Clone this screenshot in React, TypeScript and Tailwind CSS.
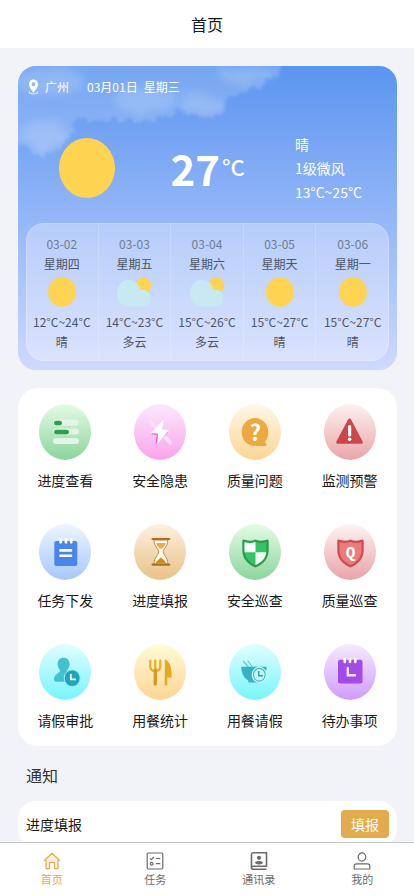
import { ReactNode } from "react";

type Forecast = {
  date: string;
  week: string;
  range: string;
  text: string;
};

type Service = {
  name: string;
  id: string;
  from: string;
  to: string;
  icon: ReactNode;
};

const forecasts: Forecast[] = [
  { date: "03-02", week: "星期四", range: "12°C~24°C", text: "晴" },
  { date: "03-03", week: "星期五", range: "14°C~23°C", text: "多云" },
  { date: "03-04", week: "星期六", range: "15°C~26°C", text: "多云" },
  { date: "03-05", week: "星期天", range: "15°C~27°C", text: "晴" },
  { date: "03-06", week: "星期一", range: "15°C~27°C", text: "晴" },
];

const shield =
  "M26.5 15.5 C22.5 17.4 18.5 17 14.6 15.6 Q13.3 15.6 13.3 17 V26 C13.3 35 19 40.5 26.5 43.5 C34 40.5 39.7 35 39.7 26 V17 Q39.7 15.6 38.4 15.6 C34.5 17 30.5 17.4 26.5 15.5Z";
const innerShield =
  "M26.5 18 C22.5 19.5 19 19.3 15.5 18.3 V26 C15.5 33.5 20 38.3 26.5 41 C33 38.3 37.5 33.5 37.5 26 V18.3 C34 19.3 30.5 19.5 26.5 18Z";

const services: Service[] = [
  {
    name: "进度查看",
    id: "progress",
    from: "#e4fbe4",
    to: "#8bd49c",
    icon: (
      <>
        <g fill="#e3f5e6">
          <rect x="14" y="15.5" width="26" height="6" rx="3" />
          <rect x="14" y="24.5" width="26" height="6" rx="3" />
          <rect x="14" y="34" width="26" height="6" rx="3" />
        </g>
        <rect x="15" y="16.8" width="8" height="4.4" rx="2.2" fill="#2f9f4d" />
        <rect x="15" y="25.8" width="15" height="4.4" rx="2.2" fill="#2f9f4d" />
      </>
    ),
  },
  {
    name: "安全隐患",
    id: "danger",
    from: "#fde9fd",
    to: "#f9a3ea",
    icon: (
      <>
        <path
          d="M16 17.5 L21 22.5 M31.5 33.5 L36 38.5"
          stroke="#fbe0f8"
          strokeWidth="3.6"
          strokeLinecap="round"
        />
        <path d="M29 19 L17.3 30.3 L22.5 31 L21.5 40.8 L34 28 L29 27Z" fill="#e763d2" />
        <path d="M29.5 15.5 L17 29 L24 29.8 L23.2 40 L35 26 L28.6 25.5Z" fill="#fff" />
      </>
    ),
  },
  {
    name: "质量问题",
    id: "question",
    from: "#fff7e9",
    to: "#fdd592",
    icon: (
      <>
        <path
          d="M26 14 C33.5 14 39.3 20.5 39.3 28 C39.3 32 38 35 36 38 L37.8 40.5 Q38 42 36.5 42 H26 C18.5 42 12.7 36 12.7 28 C12.7 20.5 18.5 14 26 14Z"
          fill="#eba93f"
        />
        <text
          x="26.3"
          y="36.5"
          textAnchor="middle"
          fontSize="22"
          fontWeight="700"
          fontFamily="'Noto Sans CJK SC', sans-serif"
          fill="#fff"
        >
          ?
        </text>
      </>
    ),
  },
  {
    name: "监测预警",
    id: "alert",
    from: "#fdf1f1",
    to: "#e9a5a8",
    icon: (
      <>
        <path
          d="M25.6 16 L37.3 38.3 H13.7Z"
          fill="#cc4549"
          stroke="#cc4549"
          strokeWidth="3"
          strokeLinejoin="round"
        />
        <path d="M25.6 22.5 V31" stroke="#fff" strokeWidth="3.2" strokeLinecap="round" />
        <circle cx="25.6" cy="35.3" r="1.8" fill="#fff" />
      </>
    ),
  },
  {
    name: "任务下发",
    id: "task",
    from: "#eef5ff",
    to: "#a6c8fc",
    icon: (
      <>
        <rect x="15.3" y="17" width="23" height="25" rx="2" fill="#4a86ea" />
        <path
          d="M21.7 15.5 V18.3 M27 15.5 V18.3 M32.2 15.5 V18.3"
          stroke="#fff"
          strokeWidth="2.8"
          strokeLinecap="round"
        />
        <path
          d="M21.4 26.4 H32 M21.4 31.8 H32"
          stroke="#fff"
          strokeWidth="2.6"
          strokeLinecap="round"
        />
      </>
    ),
  },
  {
    name: "进度填报",
    id: "hourglass",
    from: "#fcf1e0",
    to: "#e9c287",
    icon: (
      <>
        <path
          d="M20 16 H33.8 C33.8 23 29.3 24 29.3 27.8 C29.3 31.5 33.8 33 33.8 40 H20 C20 33 24.6 31.5 24.6 27.8 C24.6 24 20 23 20 16Z"
          fill="#fffaf0"
          stroke="#b98c4a"
          strokeWidth="1"
        />
        <path d="M22.3 19 H31.6 Q31 23 27 25 Q23 23 22.3 19Z" fill="#f0ac4a" />
        <path d="M21.8 39 C23 36 25 35.5 27 33.5 C29 35.5 31 36 32 39Z" fill="#d18b1d" />
        <path
          d="M18.5 15 H35.3 M18.5 40.6 H35.3"
          stroke="#a87125"
          strokeWidth="2.2"
          strokeLinecap="round"
        />
      </>
    ),
  },
  {
    name: "安全巡查",
    id: "safe",
    from: "#e4fce6",
    to: "#8dd49c",
    icon: (
      <>
        <path d={shield} fill="#2d9a4d" />
        <path d={innerShield} fill="#35c463" />
        <path d="M26.5 18 C22.5 19.5 19 19.3 15.5 18.3 V26 L15.8 28.3 H26.5Z" fill="#fff" />
        <path d="M26.5 28.3 H37.3 C36.6 34.5 32.5 38.5 26.5 41Z" fill="#f1fcf3" />
      </>
    ),
  },
  {
    name: "质量巡查",
    id: "quality",
    from: "#fdf3f3",
    to: "#e8a4a7",
    icon: (
      <>
        <path d={shield} fill="#cc4c50" />
        <path d={innerShield} fill="#ea7b7e" />
        <text
          x="26.5"
          y="33.5"
          textAnchor="middle"
          fontSize="16"
          fontWeight="700"
          fontFamily="'Liberation Mono', monospace"
          fill="#fff"
        >
          Q
        </text>
      </>
    ),
  },
  {
    name: "请假审批",
    id: "leave",
    from: "#e2fdff",
    to: "#76f5fb",
    icon: (
      <>
        <path
          d="M24.5 13.8 C28.3 13.8 30.6 16.4 30.6 20 C30.6 23 29.2 24.5 28.3 26.2 C28 28.5 34 28.5 34.5 33 V37.8 H17 Q15 37.8 15 35.5 C15 29.5 21.2 29.5 21 26.2 C20 24.5 18.6 23 18.6 20 C18.6 16.4 20.8 13.8 24.5 13.8Z"
          fill="#43c1cf"
        />
        <ellipse cx="33.2" cy="34.2" rx="8" ry="8.4" fill="#1fa6bd" stroke="#9cecf3" strokeWidth="1" />
        <path d="M31.8 30 V35.3 H36.8" fill="none" stroke="#fff" strokeWidth="1.7" />
      </>
    ),
  },
  {
    name: "用餐统计",
    id: "meal",
    from: "#fffbd9",
    to: "#fdd592",
    icon: (
      <>
        <path
          d="M16.3 16.7 V22 Q16.3 27 21.3 27 Q26.3 27 26.3 22 V16.7 M21.3 16.7 V25"
          fill="none"
          stroke="#e6b02c"
          strokeWidth="2.3"
          strokeLinecap="round"
        />
        <path d="M21.3 26 V40" stroke="#d59a25" strokeWidth="3.4" strokeLinecap="round" />
        <path
          d="M30.8 16.3 Q30.8 15 32 15.7 C36.2 18.5 38 25 37.6 33.5 H33.3 V41 Q32 42.4 30.8 41Z"
          fill="#e6a81f"
        />
      </>
    ),
  },
  {
    name: "用餐请假",
    id: "bowl",
    from: "#e2fdff",
    to: "#76f5fb",
    icon: (
      <>
        <path
          d="M14.5 17.5 L19 22.5 M19 17 L23 22.5"
          stroke="#62cbd5"
          strokeWidth="1.2"
          strokeLinecap="round"
        />
        <path
          d="M12.3 22.8 H37.5 C37.5 29.5 34.5 34.5 31 36.5 V38.5 H19.3 V36.5 C15 34 12.3 29.5 12.3 22.8Z"
          fill="#35b3c2"
        />
        <ellipse cx="30.3" cy="30.8" rx="7.6" ry="8" fill="#d8fbfd" />
        <ellipse cx="30.3" cy="30.8" rx="5.9" ry="6.4" fill="#c7f4f8" stroke="#45bcca" strokeWidth="1.2" />
        <path d="M29.8 27 V31.8 H34" fill="none" stroke="#2aa5b6" strokeWidth="1.5" />
      </>
    ),
  },
  {
    name: "待办事项",
    id: "todo",
    from: "#f6eafe",
    to: "#d09bfb",
    icon: (
      <>
        <rect x="14" y="15.8" width="24.5" height="23.6" rx="2" fill="#a24be6" />
        <path
          d="M20.8 15 V18 M26 15 V18 M31.3 15 V18"
          stroke="#fff"
          strokeWidth="2.6"
          strokeLinecap="round"
        />
        <path
          d="M23.8 24 V31.2 H31"
          fill="none"
          stroke="#f3e3fd"
          strokeWidth="2.4"
          strokeLinecap="round"
        />
      </>
    ),
  },
];

const tabs = [
  {
    name: "首页",
    icon: (
      <>
        <path d="M1.5 8.5 L9 1.5 L16.5 8.5 H14.8 V16.5 H11.5 V10.5 H6.5 V16.5 H3.2 V8.5Z" fill="#fbeeda" stroke="none" />
        <path d="M1 8.7 L9 1.3 L17 8.7 M3 8 V16.6 H6.5 V10.4 H11.5 V16.6 H15 V8" />
      </>
    ),
  },
  {
    name: "任务",
    icon: (
      <>
        <rect x="1.2" y="1" width="15.6" height="16" rx="1.2" />
        <path d="M4 6.3 L5.4 7.7 L7.8 5 M9.8 6.5 H14.3 M9.8 11.7 H14.3" />
        <circle cx="5.7" cy="11.8" r="1.4" />
      </>
    ),
  },
  {
    name: "通讯录",
    icon: (
      <>
        <path d="M1.5 17 V2.5 Q1.5 0.8 3 0.8 H16.5 V14.3 H3 Q1.5 14.3 1.5 15.8 Q1.5 17.3 3 17.3 H16.5" strokeWidth="1.6" />
        <circle cx="9" cy="5.8" r="2.1" fill="currentColor" stroke="none" />
        <path d="M5 10 Q9 7.8 13 10 Q13 12.4 9 12.4 Q5 12.4 5 10Z" fill="currentColor" stroke="none" />
      </>
    ),
  },
  {
    name: "我的",
    icon: (
      <>
        <ellipse cx="9" cy="5" rx="3.8" ry="4.2" />
        <path d="M1.2 17 V14 Q1.2 11.8 3.4 11.8 H14.6 Q16.8 11.8 16.8 14 V17Z" />
      </>
    ),
  },
];

const Clouds = () => (
  <svg
    className="absolute left-0 top-0"
    width="290"
    height="110"
    viewBox="0 0 290 110"
    fill="#fff"
    aria-hidden="true"
  >
    <filter id="cloud" x="-10%" y="-10%" width="120%" height="120%">
      <feTurbulence type="fractalNoise" baseFrequency="0.13" numOctaves="3" seed="4" result="n" />
      <feDisplacementMap in="SourceGraphic" in2="n" scale="14" xChannelSelector="R" yChannelSelector="G" />
      <feGaussianBlur stdDeviation="1.6" />
    </filter>
    <filter id="puff" x="-30%" y="-30%" width="160%" height="160%">
      <feTurbulence type="fractalNoise" baseFrequency="0.06" numOctaves="3" seed="9" result="n" />
      <feDisplacementMap in="SourceGraphic" in2="n" scale="18" xChannelSelector="R" yChannelSelector="G" />
      <feGaussianBlur stdDeviation="4" />
    </filter>
    <path
      filter="url(#cloud)"
      opacity="0.17"
      d="M-12 -12 H270 L261 8 L241 21 L221 26 L207 33 L207 44 L194 51 L171 49 L161 42 L141 53 L124 56 L94 54 L74 56 L61 49 L56 59 L52 69 L44 79 L31 88 L21 90 L7 79 L-12 86Z"
    />
    <g filter="url(#puff)" opacity="0.16">
      <ellipse cx="183" cy="38" rx="20" ry="10" />
      <ellipse cx="228" cy="10" rx="24" ry="8" />
      <ellipse cx="26" cy="68" rx="24" ry="14" />
      <ellipse cx="30" cy="14" rx="36" ry="14" />
      <ellipse cx="125" cy="34" rx="32" ry="12" />
    </g>
  </svg>
);

const WeatherIcon = ({ text }: { text: string }) => (
  <svg width="36" height="30" viewBox="0 0 36 30" aria-hidden="true">
    {text === "晴" ? (
      <ellipse cx="18" cy="15" rx="14" ry="15" fill="#ffd452" />
    ) : (
      <>
        <ellipse cx="27.5" cy="8.5" rx="7.5" ry="8.5" fill="#ffd452" />
        <path
          d="M12.5 3 C19 3 23 7.5 24.5 13 C30 11.5 34.5 15.5 34.5 21 C34.5 26.5 31.5 29.5 27 29.5 H12.5 C5.5 29.5 1 24 1 16.5 C1 9 5.5 3 12.5 3Z"
          fill="#c8e8f2"
        />
      </>
    )}
  </svg>
);

const Weather = () => {
  return (
    <section className="relative overflow-hidden rounded-[18px] bg-linear-to-b from-[#5a95ef] via-[#94b6f8] to-[#cfd9fe] px-2 pb-[9px] pt-[11px] text-white">
      <Clouds />
      <div className="relative flex items-center pl-[2px] text-xs leading-5">
        <svg width="11" height="16" viewBox="0 0 11 16" aria-hidden="true">
          <path d="M2 12.5 Q0.6 13.2 1.2 14 Q5.5 16 9.8 14 Q10.4 13.2 9 12.5" fill="none" stroke="#fff" strokeWidth="0.8" />
          <path
            fillRule="evenodd"
            fill="#fff"
            d="M5.5 0.5 C8.2 0.5 10 2.7 10 5.3 C10 8.5 7.3 11 5.5 13.8 C3.7 11 1 8.5 1 5.3 C1 2.7 2.8 0.5 5.5 0.5Z M5.5 3.2 A1.9 2 0 1 0 5.5 7.2 A1.9 2 0 1 0 5.5 3.2Z"
          />
        </svg>
        <span className="ml-[6px]">广州</span>
        <span className="ml-[18px]">03月01日</span>
        <span className="ml-[6px]">星期三</span>
      </div>

      <div className="relative mt-[35px] grid grid-cols-3 items-center justify-items-center">
        <svg width="56" height="60" viewBox="0 0 56 60" aria-hidden="true">
          <ellipse cx="28" cy="30" rx="28" ry="30" fill="#ffd452" />
        </svg>
        <div className="flex items-start gap-[2px]">
          <span className="text-[42px] font-bold leading-[48px]">27</span>
          <span className="text-[22px] font-medium leading-[44px]">°C</span>
        </div>
        <div className="text-sm leading-6">
          <p>晴</p>
          <p>1级微风</p>
          <p>13°C~25°C</p>
        </div>
      </div>

      <ul className="relative mt-[19px] grid grid-cols-5 divide-x divide-white/20 rounded-[18px] bg-white/30 text-center text-xs leading-5 text-[#4d5566] ring-1 ring-inset ring-white/20">
        {forecasts.map((item) => (
          <li key={item.date} className="flex flex-col items-center pb-[9px] pt-[11px]">
            <span className="text-[#6f7b93]">{item.date}</span>
            <span>{item.week}</span>
            <div className="mb-[5px] mt-[3px]">
              <WeatherIcon text={item.text} />
            </div>
            <span className="whitespace-nowrap">{item.range}</span>
            <span>{item.text}</span>
          </li>
        ))}
      </ul>
    </section>
  );
};

const ServiceButton = ({ service }: { service: Service }) => (
  <button type="button" className="flex flex-col items-center gap-[10px]">
    <svg width="52" height="56" viewBox="0 0 52 56" aria-hidden="true">
      <linearGradient id={service.id} x1="0" y1="0" x2="0" y2="1">
        <stop offset="0" stopColor={service.from} />
        <stop offset="1" stopColor={service.to} />
      </linearGradient>
      <ellipse cx="26" cy="28" rx="26" ry="28" fill={`url(#${service.id})`} />
      {service.icon}
    </svg>
    <span className="text-sm leading-5">{service.name}</span>
  </button>
);

const App = () => {
  return (
    <div className="flex h-screen flex-col bg-[#f2f3f8] font-['Noto_Sans_CJK_SC',sans-serif] text-[#1a1a1a] [font-feature-settings:'ccmp'_0,'liga'_0]">
      <header className="flex h-12 shrink-0 items-center justify-center bg-white">
        <h1 className="text-base">首页</h1>
      </header>

      <main className="min-h-0 flex-1 overflow-y-auto pl-[18px] pr-[17px] pt-[18px] [scrollbar-width:none]">
        <Weather />

        <section className="mt-[18px] grid grid-cols-4 gap-y-[34px] rounded-[20px] bg-white py-4">
          {services.map((service) => (
            <ServiceButton key={service.id} service={service} />
          ))}
        </section>

        <h2 className="mb-[14px] mt-[17px] pl-2 text-base leading-6 text-[#333]">通知</h2>
        <section className="flex items-center justify-between rounded-[18px] bg-white px-2 py-[9px]">
          <span className="text-sm">进度填报</span>
          <button type="button" className="h-7 w-12 rounded bg-[#e3ab4b] text-sm text-white">
            填报
          </button>
        </section>
      </main>

      <nav className="grid h-[54px] shrink-0 grid-cols-4 border-t border-[#c8c8cc] bg-white pt-[9px]">
        {tabs.map((tab, index) => (
          <a
            key={tab.name}
            href="#"
            className={`flex flex-col items-center gap-px text-[11px] leading-4 ${
              index === 0 ? "text-[#e0ab50]" : "text-[#6b6b6b]"
            }`}
          >
            <svg
              width="18"
              height="18"
              viewBox="0 0 18 18"
              fill="none"
              stroke="currentColor"
              strokeWidth="1.2"
              strokeLinejoin="round"
              aria-hidden="true"
            >
              {tab.icon}
            </svg>
            {tab.name}
          </a>
        ))}
      </nav>
    </div>
  );
};

export default App;
